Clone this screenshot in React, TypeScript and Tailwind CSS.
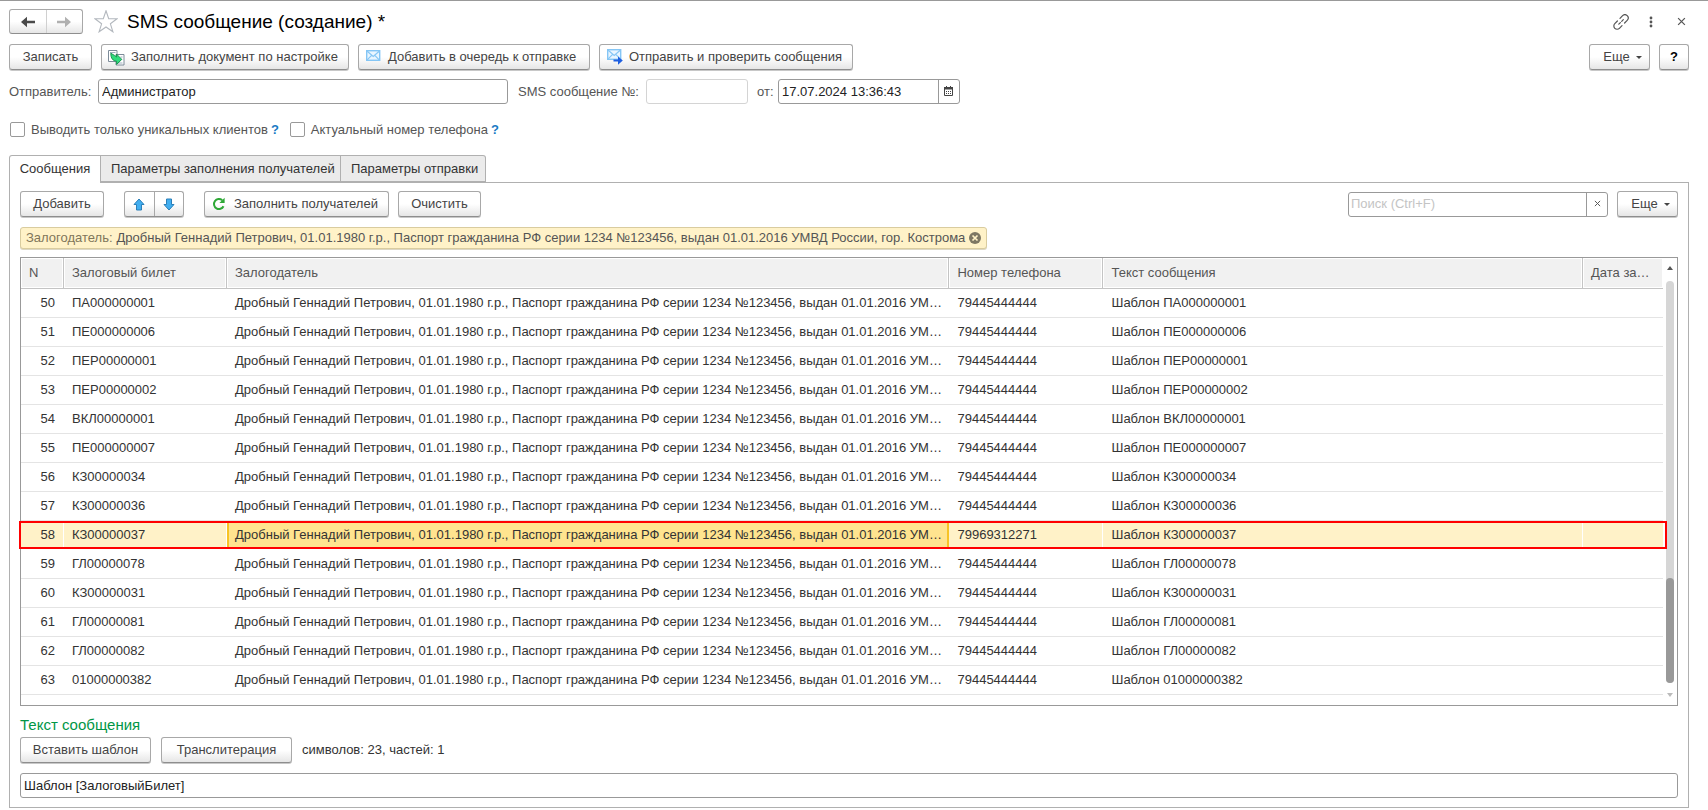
import React from "react";

const CLIENT =
  "Дробный Геннадий Петрович, 01.01.1980 г.р., Паспорт гражданина РФ серии 1234 №123456, выдан 01.01.2016 УМВД России, гор. Кострома";

const ROWS = [
  { n: 50, ticket: "ПА000000001", phone: "79445444444" },
  { n: 51, ticket: "ПЕ000000006", phone: "79445444444" },
  { n: 52, ticket: "ПЕР00000001", phone: "79445444444" },
  { n: 53, ticket: "ПЕР00000002", phone: "79445444444" },
  { n: 54, ticket: "ВКЛ00000001", phone: "79445444444" },
  { n: 55, ticket: "ПЕ000000007", phone: "79445444444" },
  { n: 56, ticket: "КЗ00000034", phone: "79445444444" },
  { n: 57, ticket: "КЗ00000036", phone: "79445444444" },
  { n: 58, ticket: "КЗ00000037", phone: "79969312271" },
  { n: 59, ticket: "ГЛ00000078", phone: "79445444444" },
  { n: 60, ticket: "КЗ00000031", phone: "79445444444" },
  { n: 61, ticket: "ГЛ00000081", phone: "79445444444" },
  { n: 62, ticket: "ГЛ00000082", phone: "79445444444" },
  { n: 63, ticket: "01000000382", phone: "79445444444" },
];

const SELECTED = 58;

const BTN =
  "flex h-[26px] shrink-0 items-center rounded-[3px] border border-[#a8a8a8] border-b-[#8e8e8e] bg-linear-to-b from-white from-50% to-[#e6e6e6] whitespace-nowrap text-[#444] shadow-[0_1px_0_#c8c8c8]";
const FIELD = "h-[25px] rounded-[3px] border border-[#999] bg-white px-[3px] text-[#222] outline-none";

function Envelope() {
  return (
    <>
      <rect x="0.7" y="0.7" width="13" height="9.6" fill="#eaf6ff" stroke="#85c6f5" strokeWidth="1.4" />
      <path d="M1.2 1.2 7.2 6.4l6-5.200M1.2 9.800 5.600 5.300M13.200 9.800 8.800 5.300" fill="none" stroke="#85c6f5" strokeWidth="1.200" />
    </>
  );
}

function Caret() {
  return (
    <svg width="6" height="3" viewBox="0 0 6 3" aria-hidden="true">
      <path d="M0 0h6L3 3z" fill="#444" />
    </svg>
  );
}

function MoreButton() {
  return (
    <button type="button" className={`${BTN} w-[61px] justify-center gap-[6px] pl-[6px]`}>
      Еще
      <Caret />
    </button>
  );
}

function Cross({ size }: { size: number }) {
  return (
    <svg width={size} height={size} viewBox="0 0 8 8" aria-hidden="true">
      <path d="M1 1l6 6M7 1 1 7" stroke="#555" strokeWidth="1.1" />
    </svg>
  );
}

function TitleBar() {
  return (
    <header className="flex h-[25px] items-center">
      <div className="flex h-[25px] w-[74px] shrink-0 rounded-[3px] border border-[#a8a8a8] border-b-[#8e8e8e] bg-linear-to-b from-white from-50% to-[#e6e6e6]">
        <button type="button" aria-label="Назад" className="flex flex-1 items-center justify-center border-r border-[#d0d0d0]">
          <svg width="14" height="12" viewBox="0 0 14 12"><path d="M0 6 6 .8V4.8h8v2.4H6v4z" fill="#4a4a4a" /></svg>
        </button>
        <button type="button" aria-label="Вперед" className="flex flex-1 items-center justify-center">
          <svg width="14" height="12" viewBox="0 0 14 12"><path d="M14 6 8 .8V4.8H0v2.4h8v4z" fill="#b0b0b0" /></svg>
        </button>
      </div>
      <button type="button" aria-label="В избранное" className="ml-[11px] shrink-0">
        <svg width="24" height="23" viewBox="0 0 24 23">
          <path d="M12 .8l2.700 7.900 8.300.1-6.600 5 2.500 8-6.900-4.800-6.900 4.800 2.500-8L1 8.800l8.300-.1z" fill="white" stroke="#b3b8be" strokeWidth="1.1" />
        </svg>
      </button>
      <h1 className="ml-[9px] truncate text-[19px] leading-[25px] text-black">SMS сообщение (создание) *</h1>
      <div className="ml-auto flex items-center pr-[3px]">
        <button type="button" aria-label="Ссылка">
          <svg width="16" height="16" viewBox="0 0 16 16" fill="none" stroke="#555" strokeWidth="1.2" strokeLinecap="round">
            <path d="M7 4.300 9.600 1.700a3.200 3.200 0 0 1 4.600 4.600L11.600 9M9 11.700 6.400 14.300a3.200 3.200 0 0 1-4.600-4.600L4.400 7M5.800 10.200l1.600-1.600M8.700 7.300l1.600-1.600" />
          </svg>
        </button>
        <button type="button" aria-label="Меню" className="ml-[20px]">
          <svg width="4" height="12" viewBox="0 0 4 12" fill="#555">
            <circle cx="2" cy="2" r="1.400" /><circle cx="2" cy="6" r="1.400" /><circle cx="2" cy="10" r="1.400" />
          </svg>
        </button>
        <button type="button" aria-label="Закрыть" className="ml-[24px]"><Cross size={9} /></button>
      </div>
    </header>
  );
}

function CommandBar() {
  return (
    <div className="mt-[10px] flex gap-[9px]">
      <button type="button" className={`${BTN} w-[83px] justify-center`}>Записать</button>
      <button type="button" className={`${BTN} w-[248px] gap-[6px] pl-[6px]`}>
        <svg width="17" height="17" viewBox="0 0 17 17" aria-hidden="true">
          <path d="M.5 1.500h8.500v11H.5z" fill="white" stroke="#7d8b99" />
          <path d="M2 3.500h5.500" stroke="#9fb0bf" />
          <path d="M8 5.500h8v10.500H8z" fill="white" stroke="#7d8b99" />
          <path d="M10 14h4.500M12.500 8h2" stroke="#9fb0bf" />
          <path d="M2.800 4.200 6.500 6.400 8.600 8V5.200l5.200 5.200-5.200 5V12.200C5 12 2.800 9.500 2.800 4.200z" fill="#2fdc7c" stroke="#14894a" strokeWidth=".9" />
        </svg>
        Заполнить документ по настройке
      </button>
      <button type="button" className={`${BTN} w-[232px] gap-[7px] pl-[7px]`}>
        <svg width="15" height="14" viewBox="0 0 15 14" aria-hidden="true"><Envelope /></svg>
        Добавить в очередь к отправке
      </button>
      <button type="button" className={`${BTN} w-[254px] gap-[6px] pl-[7px]`}>
        <svg width="16" height="16" viewBox="0 0 16 16" aria-hidden="true">
          <Envelope />
          <path d="M6.500 10.600h4.500V7.400l4.800 4.200-4.800 4.200v-3.200H6.500z" fill="#1f5fe0" />
        </svg>
        Отправить и проверить сообщения
      </button>
      <div className="ml-auto flex gap-[9px]">
        <MoreButton />
        <button type="button" className={`${BTN} w-[30px] justify-center font-bold text-black`}>?</button>
      </div>
    </div>
  );
}

function DocumentFields() {
  return (
    <div className="mt-[9px] flex items-center text-[#555]">
      <label htmlFor="sender" className="w-[89px] shrink-0">Отправитель:</label>
      <input id="sender" defaultValue="Администратор" className={`${FIELD} w-[410px] min-w-0`} />
      <label htmlFor="number" className="ml-[10px] w-[128px] shrink-0 whitespace-nowrap">SMS сообщение №:</label>
      <input id="number" className="h-[25px] w-[102px] min-w-0 rounded-[3px] border border-[#d4d4d4] bg-white" />
      <label htmlFor="date" className="ml-[9px] w-[21px] shrink-0">от:</label>
      <div className="flex h-[25px] w-[182px] shrink-0 overflow-hidden rounded-[3px] border border-[#999] bg-white">
        <input id="date" defaultValue="17.07.2024 13:36:43" className="min-w-0 flex-1 px-[3px] text-[#222] outline-none" />
        <button type="button" aria-label="Календарь" className="flex w-[21px] items-center justify-center border-l border-[#999] pr-px pb-[2px]">
          <svg width="9" height="10" viewBox="0 0 9 10">
            <path d="M.5 2h8v7.500h-8z" fill="white" stroke="#444" />
            <path d="M0 1h9v2.500H0zM2 0h1v2H2zM6 0h1v2H6z" fill="#444" />
            <path d="M2 5.500h1M4 5.500h1M6 5.500h1M2 7.500h1M4 7.500h1M6 7.500h1" stroke="#444" />
          </svg>
        </button>
      </div>
    </div>
  );
}

function Option({ id, text }: { id: string; text: string }) {
  return (
    <div className="flex items-center">
      <input id={id} type="checkbox" className="size-[15px] appearance-none rounded-[2px] border border-[#999] bg-white checked:bg-[#555]" />
      <label htmlFor={id} className="ml-[6px] text-[#555]">{text}</label>
      <button type="button" aria-label={`Справка: ${text}`} className="ml-[3px] font-bold text-[#1a7ac4]">?</button>
    </div>
  );
}

function Tabs() {
  const idle = "h-[27px] border border-l-0 border-[#b0b0b0] bg-[#ebebeb] pl-[10px] text-left text-[#333] whitespace-nowrap last:rounded-tr-[3px]";
  return (
    <div role="tablist" className="-mb-px flex">
      <button type="button" role="tab" aria-selected="true" className="h-[28px] w-[92px] rounded-tl-[3px] border border-b-0 border-[#b0b0b0] bg-white pb-px text-[#333]">
        Сообщения
      </button>
      <button type="button" role="tab" aria-selected="false" className={`${idle} w-[240px]`}>Параметры заполнения получателей</button>
      <button type="button" role="tab" aria-selected="false" className={`${idle} w-[145px]`}>Параметры отправки</button>
    </div>
  );
}

function TableToolbar() {
  return (
    <div className="flex">
      <button type="button" className={`${BTN} w-[84px] justify-center`}>Добавить</button>
      <div className={`${BTN} ml-[20px] w-[60px]`}>
        <button type="button" aria-label="Вверх" className="flex h-full flex-1 items-center justify-center border-r border-[#a8a8a8]">
          <svg width="12" height="13" viewBox="0 0 12 13"><path d="M6 1l5 5.500H8.500V12h-5V6.500H1z" fill="#41aef0" stroke="#2b7fb8" /></svg>
        </button>
        <button type="button" aria-label="Вниз" className="flex h-full flex-1 items-center justify-center">
          <svg width="12" height="13" viewBox="0 0 12 13"><path d="M6 12l5-5.500H8.500V1h-5v5.500H1z" fill="#41aef0" stroke="#2b7fb8" /></svg>
        </button>
      </div>
      <button type="button" className={`${BTN} ml-[20px] w-[185px] gap-[8px] pl-[7px]`}>
        <svg width="14" height="14" viewBox="0 0 14 14" aria-hidden="true">
          <path d="M11.500 9.200A5 5 0 1 1 10.200 3.200" fill="none" stroke="#2ea836" strokeWidth="2" />
          <path d="M12.600.8v5.200H7.400z" fill="#2ea836" />
        </svg>
        Заполнить получателей
      </button>
      <button type="button" className={`${BTN} ml-[9px] w-[83px] justify-center`}>Очистить</button>
      <div className="ml-auto flex items-center gap-[9px]">
        <div className="flex h-[25px] w-[260px] overflow-hidden rounded-[3px] border border-[#999] bg-white">
          <input aria-label="Поиск" placeholder="Поиск (Ctrl+F)" className="min-w-0 flex-1 px-[2px] outline-none placeholder:text-[#c4c4c4]" />
          <button type="button" aria-label="Очистить поиск" className="flex w-[21px] items-center justify-center border-l border-[#999] pb-[2px]"><Cross size={7} /></button>
        </div>
        <MoreButton />
      </div>
    </div>
  );
}

function MessagesTable() {
  const th = "border-r border-b border-[#c4c4c4] p-px font-normal last:border-r-0";
  const thInner = "flex h-[28px] items-center bg-[#f1f1f1] pl-[7px] text-[#555]";
  return (
    <div className="mt-[8px] flex h-[449px] border border-[#999] bg-white">
      <div className="min-w-0 flex-1">
        <table className="w-full table-fixed border-separate border-spacing-0 text-left">
          <colgroup>
            <col className="w-[43px]" />
            <col className="w-[163px]" />
            <col className="w-[44%]" />
            <col className="w-[154px]" />
            <col />
            <col className="w-[80px]" />
          </colgroup>
          <thead>
            <tr>
              {["N", "Залоговый билет", "Залогодатель", "Номер телефона", "Текст сообщения", "Дата за…"].map((t) => (
                <th key={t} className={th}><div className={thInner}>{t}</div></th>
              ))}
            </tr>
          </thead>
          <tbody className="text-[#333]">
            {ROWS.map((r) => {
              const sel = r.n === SELECTED;
              const td = sel
                ? "h-[29px] truncate border-r border-b border-white bg-[#fff2c8] pl-[8px] last:border-r-0"
                : "h-[29px] truncate border-b border-[#e4e4e4] pl-[8px]";
              return (
                <tr key={r.n} className={sel ? "relative" : ""}>
                  <td className={`${td} ${sel ? "pr-[8px]" : "pr-[9px]"} text-right`}>{r.n}</td>
                  <td className={td}>{r.ticket}</td>
                  <td className={sel ? "h-[29px] truncate border-b border-white bg-[#ffe48f] pr-[4px] pl-[8px] shadow-[inset_0_0_0_2px_#f7c325]" : `${td} pr-[4px]`}>{CLIENT}</td>
                  <td className={td}>{r.phone}</td>
                  <td className={td}>Шаблон {r.ticket}</td>
                  <td className={td}>
                    {sel && <span className="pointer-events-none absolute top-0 -right-[4px] bottom-px -left-[2px] border-2 border-[#f00]" />}
                  </td>
                </tr>
              );
            })}
          </tbody>
        </table>
      </div>
      <div className="flex w-[14px] flex-col items-center pt-[8px] pb-[8px]">
        <svg width="6" height="4" viewBox="0 0 6 4"><path d="M0 4h6L3 0z" fill="#555" /></svg>
        <div className="mt-[11px] flex w-[8px] flex-1 flex-col justify-end rounded-full bg-[#d6d6d6]">
          <div className="h-[105px] rounded-full bg-[#999]" />
        </div>
        <svg className="mt-[10px]" width="6" height="4" viewBox="0 0 6 4"><path d="M0 0h6L3 4z" fill="#bbb" /></svg>
      </div>
    </div>
  );
}

export default function App() {
  return (
    <main className="min-h-screen border-t border-[#999] bg-white pt-[8px] pr-[19px] pb-px pl-[9px] font-['Liberation_Sans',Arial,sans-serif] text-[13px] leading-[16px]">
      <TitleBar />
      <CommandBar />
      <DocumentFields />
      <div className="mt-[17px] mb-[17px] flex h-[17px] items-center gap-[11px] pl-px">
        <Option id="unique" text="Выводить только уникальных клиентов" />
        <Option id="actual" text="Актуальный номер телефона" />
      </div>
      <Tabs />
      <section className="border border-[#b0b0b0] px-[10px] pt-[8px] pb-[9px]">
        <TableToolbar />
        <div className="mt-[10px] flex">
          <div className="flex h-[22px] items-center rounded-[3px] border border-[#d9cc9f] bg-[#fff2c8] px-[5px] whitespace-nowrap text-[#555] shadow-[0_1px_0_#dcd7c4]">
            <span className="mr-[4px] text-[#80765a]">Залогодатель:</span>
            {CLIENT}
            <button type="button" aria-label="Снять отбор" className="ml-[4px]">
              <svg width="12" height="12" viewBox="0 0 12 12"><circle cx="6" cy="6" r="6" fill="#7d7763" /><path d="M3.500 3.500l5 5M8.500 3.500l-5 5" stroke="#fff2c8" strokeWidth="1.700" /></svg>
            </button>
          </div>
        </div>
        <MessagesTable />
        <h2 className="mt-[9px] h-[20px] text-[15px] leading-[20px] text-[#009646]">Текст сообщения</h2>
        <div className="mt-[2px] flex items-center gap-[10px]">
          <button type="button" className={`${BTN} w-[131px] justify-center`}>Вставить шаблон</button>
          <button type="button" className={`${BTN} w-[131px] justify-center`}>Транслитерация</button>
          <span className="text-[#333]">символов: 23, частей: 1</span>
        </div>
        <input aria-label="Текст сообщения" defaultValue="Шаблон [ЗалоговыйБилет]" className={`${FIELD} mt-[10px] block w-full`} />
      </section>
    </main>
  );
}
